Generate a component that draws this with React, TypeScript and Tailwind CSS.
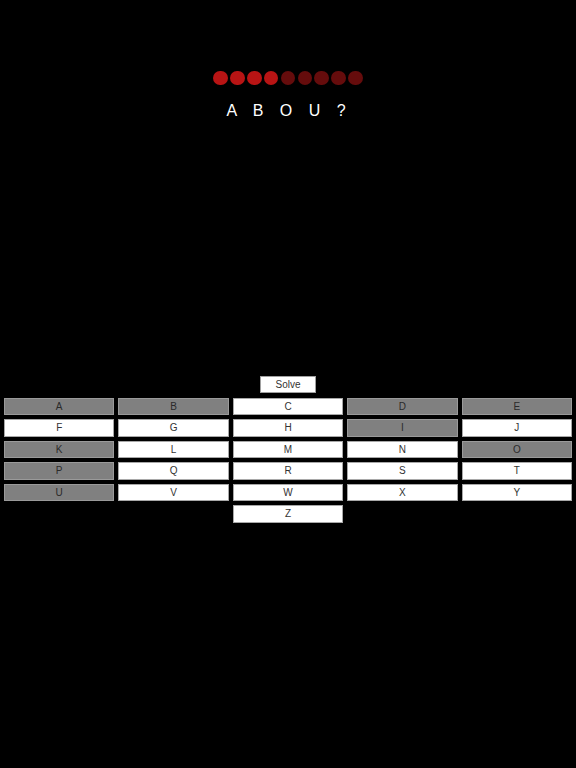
import React from "react";

const columns: { l: string; g: boolean }[][] = [
  [
    { l: "A", g: true },
    { l: "F", g: false },
    { l: "K", g: true },
    { l: "P", g: true },
    { l: "U", g: true },
  ],
  [
    { l: "B", g: true },
    { l: "G", g: false },
    { l: "L", g: false },
    { l: "Q", g: false },
    { l: "V", g: false },
  ],
  [
    { l: "C", g: false },
    { l: "H", g: false },
    { l: "M", g: false },
    { l: "R", g: false },
    { l: "W", g: false },
    { l: "Z", g: false },
  ],
  [
    { l: "D", g: true },
    { l: "I", g: true },
    { l: "N", g: false },
    { l: "S", g: false },
    { l: "X", g: false },
  ],
  [
    { l: "E", g: true },
    { l: "J", g: false },
    { l: "O", g: true },
    { l: "T", g: false },
    { l: "Y", g: false },
  ],
];

const dots = [true, true, true, true, false, false, false, false, false];

export default function App() {
  return (
    <div
      className="w-[576px] h-[768px] bg-black flex flex-col items-center pt-[70.5px]"
      style={{ fontFamily: '"Liberation Sans", Arial, sans-serif' }}
    >
      <div className="flex gap-[2.3px]">
        {dots.map((on, i) => (
          <div
            key={i}
            className={
              "w-[14.6px] h-[14.6px] rounded-full " +
              (on ? "bg-[#b81414]" : "bg-[#650c0c]")
            }
          />
        ))}
      </div>
      <div className="mt-[15.5px] h-[20px] leading-[20px] text-[16px] text-white tracking-[6px] pl-[2px] whitespace-pre">
        A B O U ?
      </div>
      <div className="mt-[255px] w-full flex flex-col items-center">
        <div className="w-[56px] h-[17.5px] bg-white border border-[#a0a0a0] flex items-center justify-center text-[10px] text-[#333]">
          Solve
        </div>
        <div className="mt-[4.5px] w-full px-[4px] grid grid-cols-5 gap-x-[4px] items-start">
          {columns.map((col, ci) => (
            <div key={ci} className="flex flex-col gap-[4px]">
              {col.map((c) => (
                <div
                  key={c.l}
                  className={
                    "h-[17.5px] border flex items-center justify-center text-[10px] " +
                    (c.g
                      ? "bg-[#808080] border-[#9a9a9a] text-[#2a2a2a]"
                      : "bg-white border-[#a8a8a8] text-[#333]")
                  }
                >
                  {c.l}
                </div>
              ))}
            </div>
          ))}
        </div>
      </div>
    </div>
  );
}
